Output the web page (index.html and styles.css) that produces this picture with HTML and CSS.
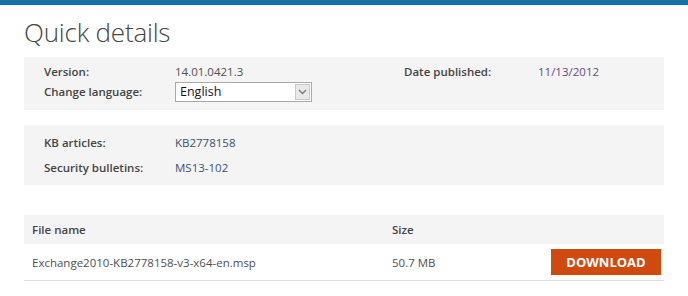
FILE: index.html
```html
<!DOCTYPE html>
<html lang="en">
<head>
<meta charset="utf-8">
<title>Quick details</title>
<link rel="stylesheet" href="styles.css">
</head>
<body>
<div class="topbar"></div>
<main class="content">
  <h1 class="title">Quick details</h1>

  <section class="panel panel-first">
    <div class="grid grid-4">
      <div class="label">Version:</div>
      <div class="value">14.01.0421.3</div>
      <div class="label">Date published:</div>
      <div class="value date">11/13/2012</div>
      <div class="label">Change language:</div>
      <div class="value">
        <div class="select">
          <span class="select-text">English</span>
          <span class="select-btn">
            <svg width="9" height="6" viewBox="0 0 9 6"><path d="M1 1 L4.5 4.5 L8 1" fill="none" stroke="#7a7a7a" stroke-width="1.4"/></svg>
          </span>
        </div>
      </div>
    </div>
  </section>

  <section class="panel panel-second">
    <div class="grid grid-2">
      <div class="label">KB articles:</div>
      <div class="value link">KB2778158</div>
      <div class="label">Security bulletins:</div>
      <div class="value link">MS13-102</div>
    </div>
  </section>

  <div class="files">
    <div class="files-head">
      <div class="col-name">File name</div>
      <div class="col-size">Size</div>
      <div class="col-action"></div>
    </div>
    <div class="files-row">
      <div class="col-name">Exchange2010-KB2778158-v3-x64-en.msp</div>
      <div class="col-size">50.7 MB</div>
      <div class="col-action"><a class="download" href="#">DOWNLOAD</a></div>
    </div>
  </div>
</main>
</body>
</html>
```

FILE: styles.css
```css
html, body {
  margin: 0;
  padding: 0;
  background: #ffffff;
}

body {
  font-family: "Open Sans", "Noto Sans", "Liberation Sans", sans-serif;
  font-size: 11.5px;
  color: #505050;
}

.topbar {
  height: 5px;
  background: #1570a6;
}

.content {
  width: 640px;
  padding-left: 24px;
}

.title {
  margin: 0;
  padding: 9px 0 0 0;
  height: 43px;
  font-weight: 300;
  font-size: 26px;
  line-height: 36px;
  color: #454545;
  letter-spacing: -0.2px;
}

.panel {
  background: #f4f4f4;
  padding-left: 20px;
}

.panel-first {
  padding-top: 6px;
  padding-bottom: 8px;
}

.panel-second {
  margin-top: 15px;
  padding-top: 9px;
  padding-bottom: 8px;
}

.grid {
  display: grid;
  align-items: center;
}

.grid-4 {
  grid-template-columns: 131px 229px 134px auto;
  grid-template-rows: 18px 20px;
  row-gap: 1px;
}

.grid-2 {
  grid-template-columns: 131px auto;
  grid-template-rows: 18px 18px;
  row-gap: 7px;
}

.label {
  font-weight: 600;
  color: #454545;
  line-height: 18px;
}

.value {
  line-height: 18px;
  color: #505050;
}

.date {
  color: #6a4b7c;
}

.link {
  color: #3b5273;
}

.select {
  display: flex;
  align-items: stretch;
  width: 135px;
  height: 18px;
  border: 1px solid #a9a9a9;
  background: #ffffff;
}

.select-text {
  flex: 1;
  padding-left: 4px;
  font-size: 12.5px;
  line-height: 18px;
  color: #1a1020;
}

.select-btn {
  width: 15px;
  margin: 1px;
  background: #e8e8e8;
  border: 1px solid #c8c8c8;
  box-sizing: border-box;
  display: flex;
  align-items: center;
  justify-content: center;
}

.files {
  margin-top: 30px;
}

.files-head,
.files-row {
  display: grid;
  grid-template-columns: 368px 152px 120px;
  align-items: center;
}

.files-head {
  height: 29px;
  background: #f4f4f4;
  font-weight: 600;
  color: #454545;
}

.files-row {
  height: 36px;
  border-bottom: 1px solid #dcdcdc;
}

.col-name {
  padding-left: 8px;
}

.col-action {
  display: flex;
  justify-content: flex-end;
  padding-right: 3px;
}

.download {
  display: block;
  width: 110px;
  height: 26px;
  line-height: 26px;
  text-align: center;
  background: #d04a10;
  color: #ffffff;
  font-weight: 700;
  font-size: 13px;
  text-decoration: none;
}
```
